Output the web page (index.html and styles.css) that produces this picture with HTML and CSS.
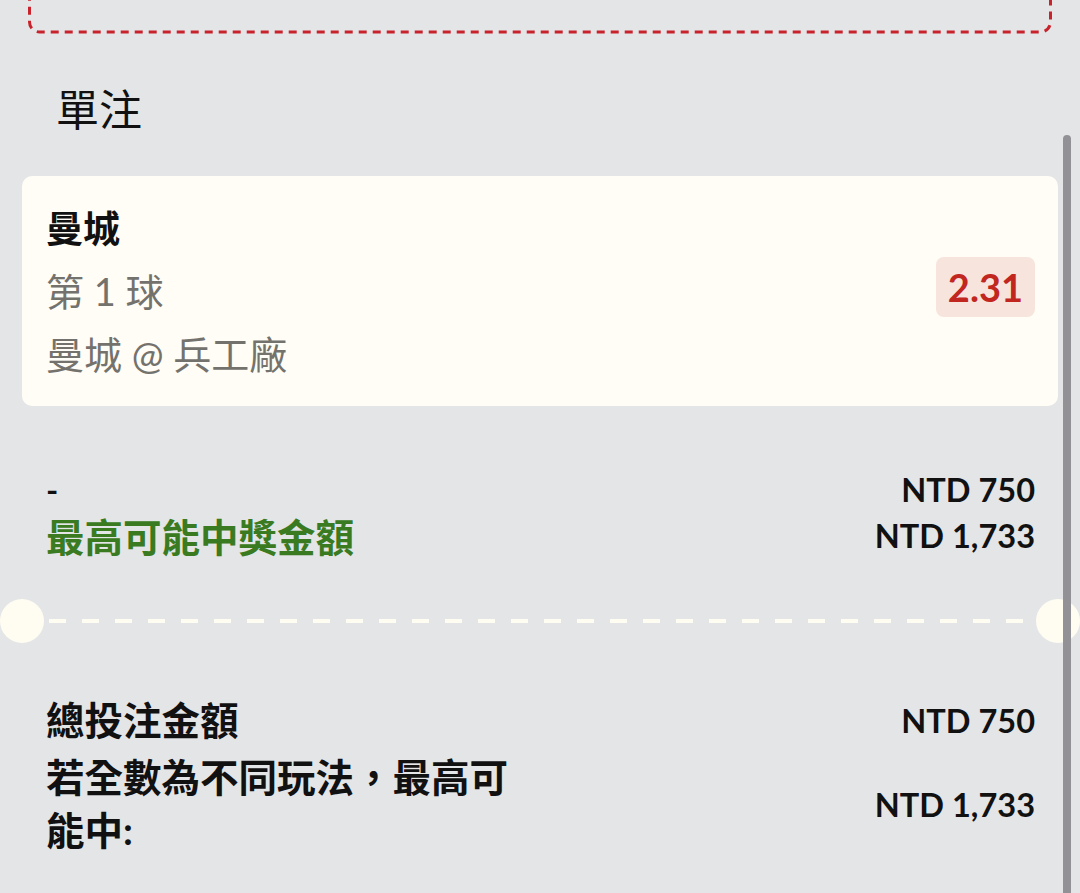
FILE: index.html
```html
<!DOCTYPE html>
<html lang="zh-Hant">
<head>
<meta charset="utf-8">
<title>單注</title>
<link rel="stylesheet" href="styles.css">
</head>
<body>
<div class="page">
  <div class="notice">
    <svg class="notice-border" width="1024" height="60" viewBox="0 0 1024 60" aria-hidden="true">
      <rect x="1.5" y="-20" width="1021" height="78" rx="10" ry="10" fill="none" stroke="#c8232c" stroke-width="3" stroke-dasharray="8 6"/>
    </svg>
  </div>
  <h2 class="title">單注</h2>
  <div class="card">
    <div class="card-info">
      <div class="team">曼城</div>
      <div class="sub">第 1 球</div>
      <div class="sub">曼城 @ 兵工廠</div>
    </div>
    <div class="odds">2.31</div>
  </div>
  <div class="summary">
    <div class="row">
      <span class="label dash">-</span>
      <span class="amount">NTD 750</span>
    </div>
    <div class="row">
      <span class="label green">最高可能中獎金額</span>
      <span class="amount">NTD 1,733</span>
    </div>
  </div>
  <div class="separator">
    <span class="hole"></span>
    <span class="dashes"></span>
    <span class="hole"></span>
  </div>
  <div class="totals">
    <div class="row">
      <span class="label">總投注金額</span>
      <span class="amount">NTD 750</span>
    </div>
    <div class="row multi">
      <span class="label wrap">若全數為不同玩法，最高可能中:</span>
      <span class="amount">NTD 1,733</span>
    </div>
  </div>
  <div class="scrollbar"></div>
</div>
</body>
</html>
```

FILE: styles.css
```css
html, body {
  margin: 0;
  padding: 0;
  background: #e4e5e7;
}
body {
  font-family: "Lato", "Noto Sans CJK TC", sans-serif;
  color: #111;
  overflow: hidden;
}
.page {
  position: relative;
  width: 1080px;
  height: 893px;
  overflow: hidden;
}
.notice {
  position: relative;
  margin: -26px 28px 0 28px;
  height: 60px;
}
.notice-border {
  position: absolute;
  left: 0;
  top: 0;
  display: block;
}
.title {
  margin: 52px 0 0 0;
  padding-left: 56px;
  font-size: 43px;
  line-height: 48px;
  font-weight: 400;
  color: #111;
}
.card {
  margin: 42px 22px 0 22px;
  background: #fffdf5;
  border-radius: 10px;
  padding: 21px 23px 20px 24px;
  display: flex;
  align-items: center;
  justify-content: space-between;
}
.card-info {
  display: flex;
  flex-direction: column;
}
.team {
  font-size: 37px;
  line-height: 63px;
  font-weight: 700;
  color: #111;
}
.sub {
  font-size: 38px;
  line-height: 63px;
  color: #74726d;
}
.odds {
  background: #f6e4dd;
  color: #c1261f;
  font-weight: 700;
  font-size: 38px;
  line-height: 60px;
  padding: 0 12px;
  border-radius: 8px;
  margin-bottom: 10px;
}
.summary {
  padding: 60px 45px 0 46px;
}
.row {
  display: flex;
  justify-content: space-between;
  align-items: center;
}
.summary .row {
  height: 46px;
}
.label {
  font-size: 38.5px;
  font-weight: 700;
  color: #111;
}
.dash {
  font-size: 33px;
}
.green {
  color: #3a7b22;
}
.amount {
  font-size: 32.5px;
  font-weight: 700;
  color: #111;
  white-space: nowrap;
}
.separator {
  margin-top: 41px;
  height: 44px;
  display: flex;
  align-items: center;
}
.hole {
  flex: none;
  width: 44px;
  height: 44px;
  border-radius: 50%;
  background: #fffdf2;
}
.dashes {
  flex: 1;
  height: 4px;
  margin: 0 1px 0 5px;
  background: repeating-linear-gradient(to right, #fffdf2 0 17px, transparent 17px 33px);
}
.totals {
  padding: 51px 45px 0 46px;
  display: flex;
  flex-direction: column;
  gap: 4px;
}
.totals .label {
  line-height: 53px;
}
.wrap {
  width: 480px;
}
.scrollbar {
  position: absolute;
  left: 1063px;
  top: 135px;
  width: 8px;
  height: 780px;
  border-radius: 4px;
  background: #929296;
}
```
